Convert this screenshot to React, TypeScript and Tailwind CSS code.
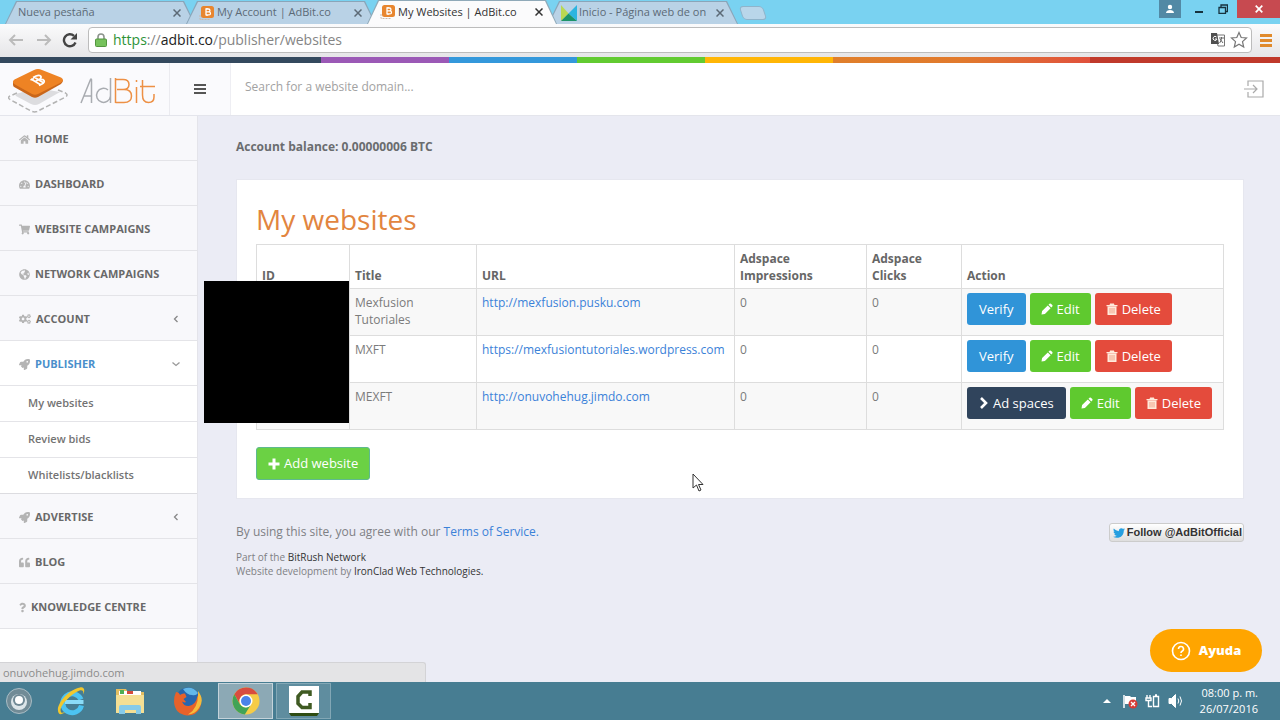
import React from "react";
import {
  FaHome, FaTachometerAlt, FaShoppingCart, FaGlobeAmericas, FaCogs, FaRocket, FaQuoteLeft,
  FaQuestion, FaTwitter,
} from "react-icons/fa";

function BitcoinFavicon() {
  return (
    <svg viewBox="0 0 16 16" className="size-4 shrink-0" aria-hidden="true">
      <path d="M1 10v4.500h10" fill="none" stroke="#c9b8ad" strokeWidth="1" strokeDasharray="2 1" />
      <rect x="2" y="1" width="13" height="12" rx="2.500" fill="#e8862f" />
      <path d="M7 4h2.500a1.400 1.400 0 0 1 0 2.900H7zm0 2.900h3a1.500 1.500 0 0 1 0 3H7zM8 3v1m0 6v1" fill="none" stroke="#fff" strokeWidth="1.300" />
    </svg>
  );
}

function JimdoFavicon() {
  return (
    <svg viewBox="0 0 16 16" className="size-4 shrink-0" aria-hidden="true">
      <path d="M0 0 7.500 8.500 0 16z" fill="#b9d853" />
      <path d="M16 0v16L7.500 8.500z" fill="#2cb5e0" />
      <path d="M0 16 7.500 8.500 16 16z" fill="#1b9469" />
    </svg>
  );
}

type TabProps = { title: string; icon?: React.ReactNode; active?: boolean };

function Tab({ title, icon, active }: TabProps) {
  return (
    <div
      className={
        active
          ? "relative z-10 -mr-[9px] h-6 w-[190px] bg-[#8fa9b8] [clip-path:polygon(11px_0,179px_0,190px_100%,0_100%)]"
          : "-mr-[9px] h-[23px] w-[190px] bg-[#8aa5b9] [clip-path:polygon(11px_0,179px_0,190px_100%,0_100%)]"
      }
    >
      <div
        className={
          active
            ? "flex h-full items-center bg-[#fbfbfc] pr-3 pl-[13px] text-[#333] [clip-path:polygon(12px_1px,178px_1px,189px_100%,1px_100%)]"
            : "flex h-full items-center bg-[#b9d2e6] pr-3 pl-[13px] text-[#5c6a76] [clip-path:polygon(12px_1px,178px_1px,189px_100%,1px_100%)]"
        }
      >
        {icon}
        <span className={icon ? "ml-0.5 flex-1 overflow-hidden whitespace-nowrap" : "flex-1 overflow-hidden whitespace-nowrap"}>{title}</span>
        <button aria-label={`Close ${title}`} className="flex size-3 items-center justify-center">
          <svg viewBox="0 0 8 8" className="size-2" fill="none" stroke="currentColor" strokeWidth="1.500"><path d="m.5.5 7 7m0-7-7 7" /></svg>
        </button>
      </div>
    </div>
  );
}

function Browser() {
  return (
    <div className="font-['Open_Sans',sans-serif]">
      <div className="flex h-6 items-end bg-[#79d2f1] pl-[5px] text-[11px]">
        <Tab title="Nueva pestaña" />
        <Tab title="My Account | AdBit.co" icon={<BitcoinFavicon />} />
        <Tab title="My Websites | AdBit.co" icon={<BitcoinFavicon />} active />
        <Tab title="Inicio - Página web de on" icon={<JimdoFavicon />} />
        <button aria-label="New tab" className="mb-1 ml-3 h-3.5 w-6 shrink-0 skew-x-[18deg] rounded-sm border border-[#8fb4cb] bg-[#b9d6ea]" />
        <div className="ml-auto flex items-start self-start">
          <button aria-label="Profile" className="flex h-[18px] w-[22px] items-center justify-center bg-[#5289a5]">
            <svg viewBox="0 0 10 10" className="size-2.5" fill="#fff"><circle cx="5" cy="3" r="2.200" /><path d="M1 9c0-4 8-4 8 0z" /></svg>
          </button>
          <button aria-label="Minimize" className="flex h-[18px] w-7 items-center justify-center pt-1 pl-2">
            <svg viewBox="0 0 10 10" className="size-2.5"><path d="M1 5h8v2H1z" fill="#16323e" /></svg>
          </button>
          <button aria-label="Restore" className="flex h-[18px] w-7 items-center justify-center">
            <svg viewBox="0 0 10 10" className="size-2.5" fill="none" stroke="#16323e" strokeWidth="1.300"><path d="M1 3.500h6.500v6H1zM3 3V1h6.500v6.500H8" /></svg>
          </button>
          <button aria-label="Close" className="flex h-[18px] w-[43px] items-center justify-center bg-[#c74a50]">
            <svg viewBox="0 0 8 8" className="size-2" fill="none" stroke="#fff" strokeWidth="1.700"><path d="m.7.700 6.600 6.600m0-6.600L.7 7.300" /></svg>
          </button>
        </div>
      </div>
      <div className="flex h-[33px] items-center bg-linear-to-b from-[#fbfbfc] to-[#e6e6e8] px-2 pb-px text-[#bbb]">
        <button aria-label="Back" className="w-[18px]">
          <svg viewBox="0 0 16 14" className="h-3.5 w-4" fill="none" stroke="currentColor" strokeWidth="2"><path d="M7 2 2 7l5 5M2 7h13" /></svg>
        </button>
        <button aria-label="Forward" className="ml-2.5 w-[18px]">
          <svg viewBox="0 0 16 14" className="h-3.5 w-4" fill="none" stroke="currentColor" strokeWidth="2"><path d="m9 2 5 5-5 5M14 7H1" /></svg>
        </button>
        <button aria-label="Reload" className="ml-2 w-[18px] text-[#444]">
          <svg viewBox="0 0 16 16" className="size-4"><path d="M13.500 10.500A6 6 0 1 1 12 3.800" fill="none" stroke="currentColor" strokeWidth="2.400" /><path d="M15 1v6.500H8.500z" fill="currentColor" /></svg>
        </button>
        <div className="ml-2 flex h-[26px] flex-1 items-center rounded-sm border border-[#bcbcbc] bg-white pr-[3px] pl-1.5">
          <svg viewBox="0 0 12 14" className="h-3.5 w-3"><path d="M3 7V4a3 3 0 0 1 6 0v3" fill="none" stroke="#8c948c" strokeWidth="1.600" /><rect x=".5" y="6" width="11" height="7.500" rx="1" fill="#76c25c" stroke="#549640" /></svg>
          <div className="ml-1.5 flex-1 text-sm text-[#858585]">
            <span className="text-[#2d9336]">https</span>://<span className="text-[#222]">adbit.co</span>/publisher/websites
          </div>
          <button aria-label="Translate">
            <svg viewBox="0 0 16 16" className="size-4"><path d="M6 3h8.500v11H8z" fill="#fff" stroke="#777" /><path d="M1 1h6l2 11H1z" fill="#505050" /><path d="M6.500 5A2 2 0 1 0 7 7H5" fill="none" stroke="#fff" /><path d="M9 6h5m-2.500-1v1c0 2-1 4-2 5m.5-4 3 4" fill="none" stroke="#666" /></svg>
          </button>
          <button aria-label="Bookmark" className="ml-1">
            <svg viewBox="0 0 18 18" className="size-[18px]"><path d="m9 1.500 2.200 5 5.300.5-4 3.600 1.200 5.400L9 13.200 4.300 16l1.200-5.400-4-3.600 5.300-.5z" fill="#fff" stroke="#777" strokeWidth="1.200" /></svg>
          </button>
        </div>
        <button aria-label="Chrome menu" className="ml-2 grid w-3 gap-0.5">
          <span className="h-[3px] bg-[#e08a2c]" /><span className="h-[3px] bg-[#e08a2c]" /><span className="h-[3px] bg-[#e08a2c]" />
        </button>
      </div>
    </div>
  );
}

function Logo() {
  return (
    <a href="#home" aria-label="AdBit" className="flex h-full w-[170px] items-center border-r border-[#ebebf0] pt-1 pl-2">
      <svg viewBox="0 0 60 46" className="h-[46px] w-[60px]" aria-hidden="true">
        <path d="M9 25 2 28q-3 1.500 0 3.500l21 11.500q3 1.500 6 .5l28.500-14.500q3-2 0-4L50 22" fill="none" stroke="#b3b3b3" strokeWidth="1.500" strokeDasharray="5 2.500" />
        <path d="m8 26 20-6 24 4-21 12q-4 2-8 0L8 28q-1-1 0-2z" fill="#dcdcdf" />
        <path d="M5 14v3q0 1.500 2 2.500l17 9.500q3 1.500 6 0l23-13q2-1.500 2-4z" fill="#c9661a" />
        <path d="M6.500 11.500 26 2q4-2 8 0l19 7.500q4 2.500 0 5L30 26q-3 1.500-6 0L7 16.500q-4-2.500-.5-5z" fill="#ee8324" />
        <path d="m23 11 10 6m-7-8 9 5.500m-12.500-2.500 3.500-1.500M25 9.500l3-1.500q4-1.500 5 .5.500 2-2.500 3.500 4-1.500 5.500.5 1 2-2 3.500l-3 1.500M27 13.500l4-2" fill="none" stroke="#fff" strokeWidth="1.700" />
      </svg>
      <svg viewBox="0 0 76 28" className="ml-3 h-7 w-[76px]" fill="none" strokeWidth="1.500" aria-hidden="true">
        <path d="M1 26 10.500 2.500q.5-1 1 0V26M4 19h7.500M30.500 1v25M30.500 19a7 7 0 1 1-2.500-6" stroke="#a9acb1" />
        <path d="M35.500 2.500H43q6 0 6 5t-6 5h-6M35.500 1v25M37 12.500h7q7.500 0 7.500 6.500t-7.500 6.500h-8.500M56.500 10v16M56.500 3v2M62.500 3v15q0 7.500 6 7.500 5.500 0 5.500-5.500v-3M60 9.500h15" stroke="#ed9045" />
      </svg>
    </a>
  );
}

type NavProps = { label: string; icon: React.ReactNode; arrow?: "left" | "down" };

function NavItem({ label, icon, arrow }: NavProps) {
  const open = arrow === "down";
  return (
    <a
      href={`#${label.toLowerCase().replace(" ", "-")}`}
      className={
        open
          ? "flex h-[45px] items-center border-b border-[#e4e4e8] bg-white pt-0.5 pr-4 pl-[19px] text-[11px] font-bold text-[#4a8fcb]"
          : "flex h-[45px] items-center border-b border-[#e4e4e8] bg-[#f8f8fb] pt-0.5 pr-4 pl-[19px] text-[11px] font-bold text-[#696969]"
      }
    >
      <span className="mr-[5px] text-[#b4b4b4]">{icon}</span>
      <span className="flex-1">{label}</span>
      {arrow === "left" && <svg viewBox="0 0 10 10" className="size-2.5" fill="none" stroke="#888" strokeWidth="1.300"><path d="M6.500 2 3.500 5l3 3" /></svg>}
      {open && <svg viewBox="0 0 10 10" className="size-2.5" fill="none" stroke="#999" strokeWidth="1.300"><path d="m1.500 3.500 3.500 3 3.500-3" /></svg>}
    </a>
  );
}

function Sidebar() {
  return (
    <nav className="w-[198px] shrink-0 border-r border-[#e4e4ea] bg-white">
      <NavItem label="HOME" icon={<FaHome />} />
      <NavItem label="DASHBOARD" icon={<FaTachometerAlt />} />
      <NavItem label="WEBSITE CAMPAIGNS" icon={<FaShoppingCart />} />
      <NavItem label="NETWORK CAMPAIGNS" icon={<FaGlobeAmericas />} />
      <NavItem label="ACCOUNT" icon={<FaCogs className="size-3" />} arrow="left" />
      <NavItem label="PUBLISHER" icon={<FaRocket />} arrow="down" />
      <ul className="divide-y divide-[#e4e4e8] border-b border-[#dcdce0] text-[11px] font-semibold text-[#737373]">
        {["My websites", "Review bids", "Whitelists/blacklists"].map((t) => (
          <li key={t}><a href="#publisher" className="flex h-[35px] items-center pl-7">{t}</a></li>
        ))}
      </ul>
      <NavItem label="ADVERTISE" icon={<FaRocket />} arrow="left" />
      <NavItem label="BLOG" icon={<FaQuoteLeft />} />
      <NavItem label="KNOWLEDGE CENTRE" icon={<FaQuestion className="w-[7px]" />} />
    </nav>
  );
}

function PencilIcon() {
  return (
    <svg viewBox="0 0 12 12" className="size-3" fill="currentColor" aria-hidden="true">
      <path d="m.5 11.500.6-3.400L6.800 2.400l2.800 2.800-5.700 5.700zM7.500 1.700l1-1q.7-.6 1.400 0l1.400 1.400q.6.700 0 1.400l-1 1z" />
    </svg>
  );
}

function TrashIcon() {
  return (
    <svg viewBox="0 0 12 12" className="size-3" aria-hidden="true">
      <path d="M.5 2h3l.6-1.500h3.800L8.500 2h3v1.200H.5zM1.500 3.500h9V12h-9z" fill="#ffe9da" />
      <path d="M4 5v5.500M6 5v5.500M8 5v5.500" stroke="#ec8f73" strokeWidth=".8" />
    </svg>
  );
}

const sites = [
  { title: "Mexfusion Tutoriales", url: "http://mexfusion.pusku.com", verified: false },
  { title: "MXFT", url: "https://mexfusiontutoriales.wordpress.com", verified: false },
  { title: "MEXFT", url: "http://onuvohehug.jimdo.com", verified: true },
];

function SitesTable() {
  const th = "border border-[#ddd] px-[5px] pb-1 text-left align-bottom font-bold text-[#666]";
  const td = "border border-[#ddd] px-[5px] pt-[5px] align-top";
  return (
    <div className="relative">
      <table className="w-full table-fixed border-collapse text-xs leading-[17px] text-[#7b7b7b]">
        <colgroup>
          <col className="w-[93px]" /><col className="w-[127px]" /><col className="w-[258px]" />
          <col className="w-[132px]" /><col className="w-[95px]" /><col />
        </colgroup>
        <thead>
          <tr className="h-11">
            <th className={th}>ID</th><th className={th}>Title</th><th className={th}>URL</th>
            <th className={th}>Adspace<br />Impressions</th><th className={th}>Adspace<br />Clicks</th><th className={th}>Action</th>
          </tr>
        </thead>
        <tbody>
          {sites.map((s) => (
            <tr key={s.url} className="h-[47px] odd:bg-[#f8f8f8]">
              <td className={td} />
              <td className={td}><div className="max-w-20">{s.title}</div></td>
              <td className={td}><a href={s.url} className="whitespace-nowrap text-[#3b82d8]">{s.url}</a></td>
              <td className={td}>0</td>
              <td className={td}>0</td>
              <td className="border border-[#ddd] px-[5px] pt-1 align-top">
                <div className="flex gap-1 text-[13px] whitespace-nowrap text-white">
                  {s.verified ? (
                    <button className="flex h-8 items-center gap-1 rounded-[3px] bg-[#30445c] px-3">
                      <svg viewBox="0 0 10 12" className="h-3 w-2.5" fill="none" stroke="currentColor" strokeWidth="2.600" aria-hidden="true"><path d="m2 1 5 5-5 5" /></svg>
                      Ad spaces
                    </button>
                  ) : (
                    <button className="h-8 rounded-[3px] bg-[#3094d8] px-3">Verify</button>
                  )}
                  <button className="flex h-8 items-center gap-1 rounded-[3px] bg-[#5fc92f] px-[11px]"><PencilIcon />Edit</button>
                  <button className="flex h-8 items-center gap-1 rounded-[3px] bg-[#e44b3c] px-[11px]"><TrashIcon />Delete</button>
                </div>
              </td>
            </tr>
          ))}
        </tbody>
      </table>
      <div className="absolute top-[37px] -left-[52px] h-[142px] w-[145px] bg-black" />
    </div>
  );
}

function Taskbar() {
  return (
    <footer className="flex h-[38px] items-center bg-[#477d92] text-white">
      <button aria-label="Start" className="ml-1.5 w-[26px]">
        <svg viewBox="0 0 26 26" className="size-[26px]"><circle cx="13" cy="13" r="12.500" fill="#718b96" stroke="#a9bdc5" /><circle cx="13" cy="14" r="8" fill="#dce5e9" /><circle cx="13" cy="12" r="6" fill="#708995" /><circle cx="13" cy="12" r="4" fill="#fff" /></svg>
      </button>
      <button aria-label="Internet Explorer" className="ml-6">
        <svg viewBox="0 0 30 30" className="size-[30px]"><path d="M25.500 19.500A9.500 9.500 0 1 1 25 13.500" fill="none" stroke="#4cc3f2" strokeWidth="5" /><path d="M9 16h18.500" stroke="#8bdcf8" strokeWidth="4" /><path d="M3 27.500C-2 21 11 4 24 1.500c5-1 5 4 3 7 1-4-1-5-3.500-4C15 8 2 21 5 26c0 1 2 1 4 0-2 2-5 3-6 1.500" fill="#f1c72e" /></svg>
      </button>
      <button aria-label="File Explorer" className="ml-7">
        <svg viewBox="0 0 32 30" className="h-[30px] w-8"><path d="M2 3h10l2 3h16v20H2z" fill="#e2bd60" /><path d="M5 5h22v5H5z" fill="#fff" /><path d="M6 4h4v4H6z" fill="#4cae55" /><path d="M13 5h6v3h-6z" fill="#d54b3c" /><path d="M2 9h28v18H2z" fill="#f4df94" /><path d="M5 28v-7q0-2 2-2h18q2 0 2 2v7h-5v-4H11v4z" fill="#86cbea" /></svg>
      </button>
      <button aria-label="Firefox" className="ml-[27px]">
        <svg viewBox="0 0 30 30" className="size-[30px]"><circle cx="15" cy="13.500" r="12" fill="#2766ae" /><path d="M10 3q9-4 15 4-2 3-6 2-5 0-9-6z" fill="#62b8ea" /><path d="M3 6q3 0 4 3 2-2 5-1.500l1.500 3.500-3 2 2.500 3q-1 1-4-.5 2 5 7 4.500 7-1.500 8.500-10 5 6 2.500 12-4 8-13 7.500Q2 28 1 16q0-6 2-10z" fill="#e7622a" /><path d="M25 5q7 9 1 17-4 6-11 6.500 11-6 10-23.500" fill="#f6bb3b" /></svg>
      </button>
      <button aria-label="Chrome" className="ml-[15px] flex h-9 w-[55px] items-center justify-center border border-[#c4d3da] bg-[#8ca9b5]">
        <svg viewBox="0 0 28 28" className="size-7"><circle cx="14" cy="14" r="13.500" fill="#f5cc47" /><path d="M2.300 7.300A13.500 13.500 0 0 1 25.700 7.300H14a7 7 0 0 0-6 10z" fill="#d84c3f" /><path d="M2.300 7.300a13.500 13.500 0 0 0 10.500 20.200l6.200-10q-6 6-11 0z" fill="#41a356" /><circle cx="14" cy="14" r="6.500" fill="#fff" /><circle cx="14" cy="14" r="5" fill="#4a82e9" /></svg>
      </button>
      <button aria-label="Camtasia" className="ml-[3px] flex h-9 w-[55px] items-center justify-center border border-[#82a7b5] bg-[#5f8d9f]">
        <svg viewBox="0 0 30 30" className="size-[30px]"><path d="M0 0h30v27H0z" fill="#fff" /><path d="M0 27h30l-2 3H2z" fill="#2e4c12" /><path d="M21 10V6h-8l-4 4.500v7l4 4h8V17" fill="none" stroke="#3f5a22" strokeWidth="3.500" /></svg>
      </button>
      <div className="ml-auto flex items-center gap-[7px]">
        <svg viewBox="0 0 8 4" className="mr-1 h-1 w-2" fill="#fff"><path d="m4 0 4 4H0z" /></svg>
        <svg viewBox="0 0 16 16" className="size-4"><path d="M2 2v13" stroke="#fff" strokeWidth="1.500" /><path d="M3 3h5l1 1h5v7H3z" fill="#fff" /><circle cx="11" cy="11" r="4.500" fill="#d73b36" /><path d="m9 9 4 4m0-4-4 4" stroke="#fff" strokeWidth="1.300" /></svg>
        <svg viewBox="0 0 16 16" className="size-4" fill="none" stroke="#fff" strokeWidth="1.400"><path d="M8.500 3.500h5v10h-5zM10 2h2" /><path d="M2 2v3m3-3v3M1 5h5v2.500H1zm2.500 2.500v6H7" /></svg>
        <svg viewBox="0 0 16 16" className="size-4" fill="none" stroke="#fff"><path d="M1 5.500h2.500l4-4v13l-4-4H1z" fill="#fff" /><path d="M10 5.500q1.500 2.500 0 5m2-7q3 4.500 0 9" /></svg>
      </div>
      <div className="mr-[22px] ml-4 text-right text-[11px] leading-4"><div>08:00 p. m.</div><div>26/07/2016</div></div>
    </footer>
  );
}

export default function App() {
  return (
    <div className="relative flex min-h-screen flex-col bg-[#ebecf5] font-['Open_Sans',sans-serif]">
      <Browser />
      <div className="flex h-1.5">
        <span className="flex-[321] bg-[#34495e]" /><span className="flex-[128] bg-[#9b59b6]" /><span className="flex-[128] bg-[#3498db]" />
        <span className="flex-[128] bg-[#62cb31]" /><span className="flex-[128] bg-[#ffb606]" />
        <span className="flex-[257] bg-linear-to-r from-[#e07f2b] via-[#e17a2d] via-50% to-[#e0503c]" /><span className="flex-[190] bg-[#c0392b]" />
      </div>
      <header className="flex h-[53px] items-center border-b border-[#e4e5ec] bg-white">
        <div className="flex h-full bg-[#fafafd]">
          <Logo />
          <button aria-label="Toggle menu" className="flex w-[61px] items-center justify-center border-r border-[#eeeef3]">
            <svg viewBox="0 0 12 11" className="h-[11px] w-3"><path d="M0 0h12v2H0zM0 4h12v2H0zM0 8h12v2H0z" fill="#555" /></svg>
          </button>
        </div>
        <input type="search" aria-label="Search" placeholder="Search for a website domain..." className="flex-1 pb-1 pl-3.5 text-xs text-[#777] outline-none placeholder:text-[#a2a2a2]" />
        <button aria-label="Log out" className="mr-4">
          <svg viewBox="0 0 20 18" className="h-[18px] w-5" fill="none" stroke="#aaa" strokeWidth="1.200"><path d="M4 6V1h15v16H4v-5M0 9h13M9 5l4 4-4 4" /></svg>
        </button>
      </header>
      <div className="flex flex-1">
        <Sidebar />
        <main className="min-w-0 flex-1 pt-[21px] pr-9 pl-[38px] text-xs text-[#6a6c6f]">
          <p className="leading-5 font-bold">Account balance: 0.00000006 BTC</p>
          <section className="mt-[22px] border border-[#e6e7ef] bg-white px-[19px] pt-5 pb-[18px]">
            <h1 className="mb-[5px] text-[28px] leading-[39px] text-[#e2853f]">My websites</h1>
            <SitesTable />
            <button className="mt-[17px] flex h-[33px] items-center gap-1 rounded-[3px] border border-[#5eb98f] bg-[#6bd144] px-[11px] text-[13px] text-white">
              <svg viewBox="0 0 12 12" className="size-3" aria-hidden="true"><path d="M6 .5v11M.5 6h11" stroke="currentColor" strokeWidth="3" /></svg>
              Add website
            </button>
          </section>
          <div className="mt-[23px] flex items-start justify-between text-[#7e8084]">
            <div>
              <p className="leading-5">By using this site, you agree with our <a href="#terms" className="text-[#3b82d8]">Terms of Service.</a></p>
              <p className="mt-2 text-[10px] leading-[14px]">Part of the <a href="#bitrush" className="text-[#333]">BitRush Network</a><br />Website development by <a href="#ironclad" className="text-[#333]">IronClad Web Technologies.</a></p>
            </div>
            <a href="#follow" className="mt-px flex h-[19px] items-center gap-0.5 rounded-[3px] border border-[#ccc] bg-linear-to-b from-white to-[#dedede] pr-px pl-[3px] font-['Liberation_Sans',sans-serif] text-[11px] font-bold text-[#333]"><FaTwitter className="size-3 text-[#259fe0]" />Follow @AdBitOfficial</a>
          </div>
        </main>
      </div>
      <Taskbar />
      <div className="absolute bottom-[38px] left-0 h-5 w-[426px] rounded-tr-[3px] border-t border-r border-[#d3d3d6] bg-[#e4e4e6] pl-[3px] text-[11px] leading-5 text-[#8b8b8b]">onuvohehug.jimdo.com</div>
      <button className="absolute right-[18px] bottom-12 flex h-[43px] w-28 items-center justify-center gap-2 rounded-full bg-[#ffa500] text-[13px] font-extrabold text-white">
        <svg viewBox="0 0 20 20" className="size-5" fill="none" stroke="#fff" strokeWidth="1.600"><circle cx="10" cy="10" r="8.500" /><path d="M7.500 8a2.500 2.500 0 1 1 3.500 2.300q-1 .500-1 1.700m0 1.500v1.500" /></svg>
        Ayuda
      </button>
      <svg viewBox="0 0 12 19" className="absolute top-[473px] left-[692px] h-[19px] w-3" fill="#fff" stroke="#333" aria-hidden="true"><path d="M1 1v14l3.500-3 2.500 6 2-1-2.500-5.500H11z" /></svg>
    </div>
  );
}
